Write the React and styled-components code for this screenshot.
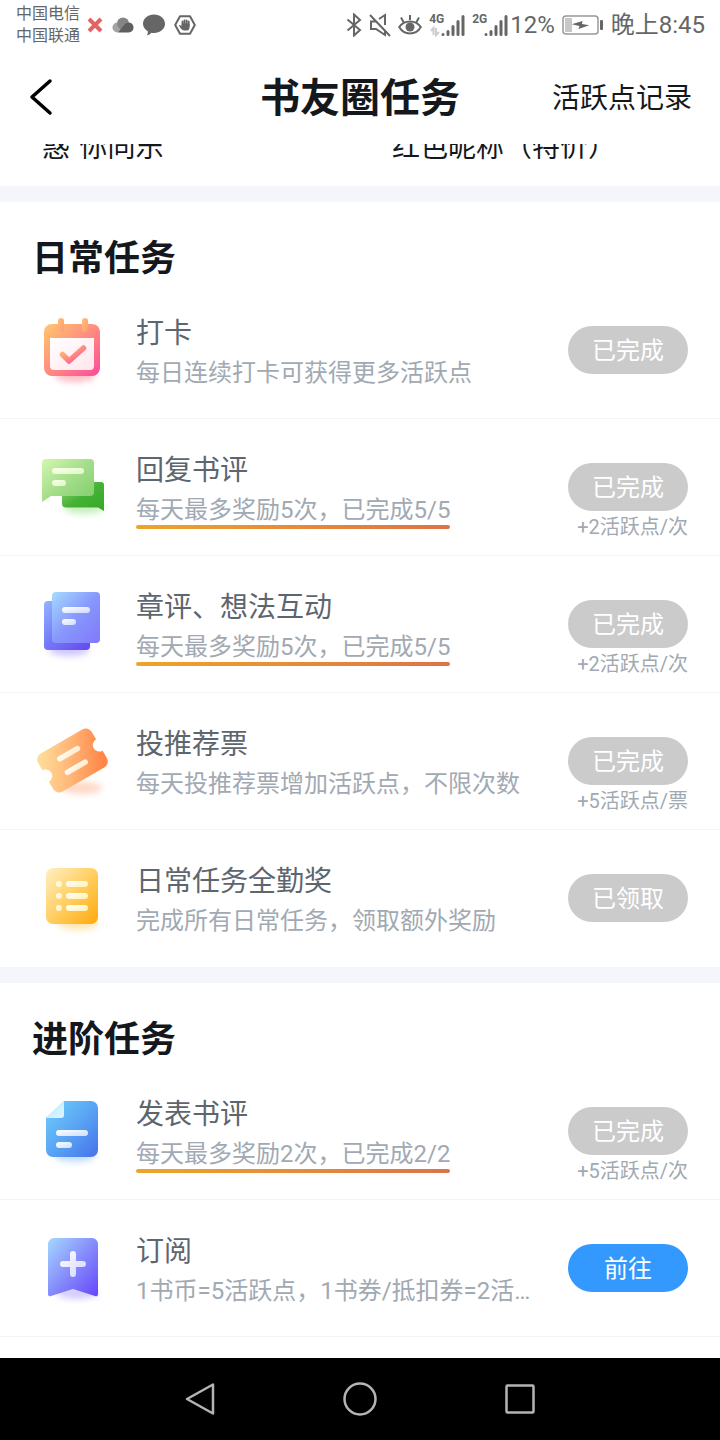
import React from "react";
import styled, { createGlobalStyle } from "styled-components";

const GlobalStyle = createGlobalStyle`
  * { box-sizing: border-box; }
  body {
    margin: 0;
    background: #fff;
    font-family: Roboto, "Noto Sans CJK SC", sans-serif;
    color: #14181d;
  }
  h1, h2, h3, p, ul { margin: 0; padding: 0; }
  button { border: 0; background: none; padding: 0; font: inherit; color: inherit; cursor: pointer; }
`;

const Page = styled.div`
  display: flex;
  flex-direction: column;
  min-height: 100vh;
`;

const StatusBar = styled.div`
  display: flex;
  align-items: center;
  justify-content: space-between;
  height: 50px;
  padding: 0 15px 0 16px;
  color: #666;
  font-size: 24px;
  line-height: 32px;
`;

const StatusGroup = styled.div`
  display: flex;
  align-items: center;
  gap: ${(p) => p.$gap}px;
  svg { display: block; flex: none; }
`;

const Carriers = styled.div`
  font-size: 16px;
  line-height: 22px;
`;

const Signal = styled.span`
  display: flex;
  align-items: flex-start;
`;

const SignalLabel = styled.span`
  width: 12px;
  font-size: 12px;
  line-height: 12px;
  font-weight: 700;
`;

const Header = styled.header`
  display: grid;
  grid-template-columns: 1fr auto 1fr;
  align-items: center;
  height: 94px;
  padding: 0 28px;
`;

const BackButton = styled.button`
  justify-self: start;
  svg { display: block; }
`;

const Title = styled.h1`
  padding-top: 4px;
  font-size: 40px;
  line-height: 56px;
  font-weight: 700;
`;

const RecordLink = styled.a`
  justify-self: end;
  padding-top: 4px;
  color: inherit;
  text-decoration: none;
  font-size: 28px;
  line-height: 40px;
`;

const Perks = styled.div`
  display: grid;
  grid-template-columns: 350px 1fr;
  align-content: end;
  height: 42px;
  padding: 0 0 20px 42px;
  overflow: hidden;
  font-size: 28px;
  line-height: 36px;
  white-space: pre;
`;

const Section = styled.section`
  border-top: 16px solid #f5f6fb;
`;

const SectionTitle = styled.h2`
  padding: 34px 32px 0;
  font-size: 36px;
  line-height: 46px;
  font-weight: 700;
`;

const List = styled.ul`
  list-style: none;
`;

const Row = styled.li`
  display: flex;
  align-items: flex-start;
  height: 137px;
  padding: 28px 32px 0;
  border-bottom: 1px solid #f4f4f5;
  ${Section}:not(:last-child) &:last-child { border-color: transparent; }
`;

const IconBox = styled.div`
  flex: none;
  width: 80px;
  height: 80px;
  margin-right: 24px;
  svg { display: block; overflow: visible; }
`;

const Info = styled.div`
  flex: 1;
  min-width: 0;
  padding-top: 4px;
`;

const TaskName = styled.h3`
  font-size: 28px;
  line-height: 40px;
  font-weight: 400;
  color: #5d656e;
`;

const TaskHint = styled.p`
  margin-top: 2px;
  font-size: 24px;
  line-height: 34px;
  color: #a1a9b2;
  overflow: hidden;
  text-overflow: ellipsis;
  white-space: nowrap;
`;

const Progress = styled(TaskHint)`
  width: fit-content;
  max-width: 100%;
  &::after {
    content: "";
    display: block;
    height: 4px;
    margin-top: -2px;
    border-radius: 2px;
    background: linear-gradient(90deg, #eda52a, #dd7347);
  }
`;

const Action = styled.div`
  flex: none;
  display: flex;
  flex-direction: column;
  align-items: flex-end;
  margin-left: 36px;
  padding-top: 16px;
`;

const Pill = styled.button`
  width: 120px;
  height: 48px;
  padding-top: 2px;
  border-radius: 24px;
  background: ${(p) => (p.$active ? "#3399ff" : "#cbcbcb")};
  color: #fff;
  font-size: 24px;
  line-height: 46px;
`;

const Reward = styled.span`
  margin-top: 2px;
  font-size: 20px;
  line-height: 28px;
  color: #a1a9b2;
`;

const Nav = styled.nav`
  display: flex;
  align-items: center;
  justify-content: center;
  gap: 124px;
  height: 82px;
  margin-top: auto;
  background: #000;
  svg { display: block; }
`;

function Grad({ id, from, mid, to }) {
  return (
    <linearGradient id={id} x1="0" y1="0" x2="1" y2="1">
      <stop offset="0" stopColor={from} />
      {mid && <stop offset="0.5" stopColor={mid} />}
      <stop offset="1" stopColor={to} />
    </linearGradient>
  );
}

function TaskSvg({ id, shadow, cx = 43, cy = 64, children }) {
  return (
    <svg width="80" height="80" viewBox="0 0 80 80" aria-hidden="true">
      <defs>
        <filter id={`${id}-blur`} x="-50%" y="-100%" width="200%" height="300%">
          <feGaussianBlur stdDeviation="3" />
        </filter>
      </defs>
      <ellipse cx={cx} cy={cy} rx="20" ry="6" fill={shadow} opacity="0.5" filter={`url(#${id}-blur)`} />
      {children}
    </svg>
  );
}

const icons = {
  checkin: (
    <TaskSvg id="checkin" shadow="#ff7a8a" cy={66}>
      <defs>
        <Grad id="ci-body" from="#ffc76e" mid="#ff8c80" to="#fb4a9c" />
        <Grad id="ci-peg" from="#ffc070" to="#ff9a78" />
        <Grad id="ci-in" from="#ffffff" to="#ffe6ec" />
      </defs>
      <rect x="12" y="14" width="56" height="52" rx="8" fill="url(#ci-body)" />
      <rect x="26" y="8" width="6" height="14" rx="3" fill="url(#ci-peg)" />
      <rect x="50" y="8" width="6" height="14" rx="3" fill="url(#ci-peg)" />
      <path d="M18 28H62V56a4 4 0 0 1-4 4H22a4 4 0 0 1-4-4Z" fill="url(#ci-in)" />
      <path d="M30.500 44.500L37 51L51.500 38" fill="none" stroke="url(#ci-body)" strokeWidth="5.500" strokeLinecap="round" strokeLinejoin="round" />
    </TaskSvg>
  ),
  reply: (
    <TaskSvg id="reply" shadow="#8fe07a" cx={52} cy={61}>
      <defs>
        <Grad id="re-f" from="#d2f7b0" mid="#a4dd8a" to="#7fce6a" />
        <Grad id="re-b" from="#8fd673" mid="#45b235" to="#35a826" />
        <Grad id="re-l" from="#fbffe9" to="#dff8c4" />
      </defs>
      <path d="M34 35H69a3 3 0 0 1 3 3V64L66 60.500H34a4 4 0 0 1-4-4V39a4 4 0 0 1 4-4Z" fill="url(#re-b)" />
      <path d="M14 12H58a4 4 0 0 1 4 4V45a4 4 0 0 1-4 4H19L10 55V16a4 4 0 0 1 4-4Z" fill="url(#re-f)" />
      <rect x="20" y="21" width="32" height="6" rx="3" fill="url(#re-l)" />
      <rect x="20" y="33" width="14" height="6" rx="3" fill="url(#re-l)" />
    </TaskSvg>
  ),
  chapter: (
    <TaskSvg id="chapter" shadow="#a08cff" cx={37} cy={66}>
      <defs>
        <Grad id="ch-b" from="#94b4ff" mid="#7377f8" to="#6447ee" />
        <Grad id="ch-f" from="#a6dbff" mid="#8798fc" to="#8078fb" />
        <Grad id="ch-l" from="#ffffff" to="#ced9ff" />
      </defs>
      <rect x="12" y="17" width="46" height="49" rx="4" fill="url(#ch-b)" />
      <rect x="20" y="8" width="48" height="51" rx="4" fill="url(#ch-f)" />
      <rect x="30" y="23" width="28" height="6" rx="3" fill="url(#ch-l)" />
      <rect x="30" y="35" width="14" height="6" rx="3" fill="url(#ch-l)" />
    </TaskSvg>
  ),
  ticket: (
    <TaskSvg id="ticket" shadow="#ffb08a" cx={50} cy={67}>
      <defs>
        <linearGradient id="ti-b" x1="0" y1="0.300" x2="1" y2="0.700">
          <stop offset="0" stopColor="#ffdb98" />
          <stop offset="0.500" stopColor="#ffb374" />
          <stop offset="1" stopColor="#ff8646" />
        </linearGradient>
        <Grad id="ti-l" from="#ffffff" to="#ffe8c0" />
      </defs>
      <g transform="translate(40.500 39.500) rotate(-30)">
        <path d="M-24-22H24a7 7 0 0 1 7 7V-6.500a6.500 6.500 0 0 0 0 13V15a7 7 0 0 1-7 7H-24a7 7 0 0 1-7-7V6.500a6.500 6.500 0 0 0 0-13V-15a7 7 0 0 1 7-7Z" fill="url(#ti-b)" />
        <rect x="-13" y="-10.500" width="26" height="5.500" rx="2.750" fill="url(#ti-l)" />
        <rect x="-13" y="5" width="26" height="5.500" rx="2.750" fill="url(#ti-l)" />
      </g>
    </TaskSvg>
  ),
  award: (
    <TaskSvg id="award" shadow="#ffcf6a" cx={46} cy={66}>
      <defs>
        <Grad id="aw-b" from="#ffefc4" mid="#ffcf62" to="#ffa80a" />
        <Grad id="aw-l" from="#ffffff" to="#fff0b4" />
      </defs>
      <rect x="14" y="10" width="52" height="56" rx="7" fill="url(#aw-b)" />
      {[26, 38, 50].map((y) => (
        <g key={y} fill="url(#aw-l)">
          <circle cx="27" cy={y} r="3" />
          <rect x="34" y={y - 3} width="22" height="6" rx="3" />
        </g>
      ))}
    </TaskSvg>
  ),
  review: (
    <TaskSvg id="review" shadow="#86b8ff" cy={65}>
      <defs>
        <Grad id="rv-b" from="#6fd0fb" mid="#5aa5f4" to="#4672ea" />
        <Grad id="rv-c" from="#b8ecff" to="#dcf6ff" />
        <Grad id="rv-l" from="#ffffff" to="#c9defc" />
      </defs>
      <path d="M32 10H59a7 7 0 0 1 7 7V59a7 7 0 0 1-7 7H21a7 7 0 0 1-7-7V27Z" fill="url(#rv-b)" />
      <path d="M32 10V24a3 3 0 0 1-3 3H14Z" fill="url(#rv-c)" />
      <rect x="24" y="39" width="32" height="6" rx="3" fill="url(#rv-l)" />
      <rect x="24" y="51" width="16" height="6" rx="3" fill="url(#rv-l)" />
    </TaskSvg>
  ),
  subscribe: (
    <TaskSvg id="subscribe" shadow="#a897ff" cx={45} cy={65}>
      <defs>
        <Grad id="su-b" from="#a5d8ff" mid="#868cfb" to="#6546fa" />
        <Grad id="su-l" from="#ffffff" to="#d3d3ff" />
      </defs>
      <path d="M22 10H60a6 6 0 0 1 6 6V66a2 2 0 0 1-3 2L42.500 61.400a4 4 0 0 0-3 0L19 68a2 2 0 0 1-3-2V16a6 6 0 0 1 6-6Z" fill="url(#su-b)" />
      <path d="M38 26a3 3 0 0 1 6 0V33H51a3 3 0 0 1 0 6H44V46a3 3 0 0 1-6 0V39H31a3 3 0 0 1 0-6H38Z" fill="url(#su-l)" />
    </TaskSvg>
  ),
};

const sections = [
  {
    title: "日常任务",
    tasks: [
      { icon: "checkin", name: "打卡", hint: "每日连续打卡可获得更多活跃点", action: "已完成" },
      { icon: "reply", name: "回复书评", hint: "每天最多奖励5次，已完成5/5", marked: true, action: "已完成", reward: "+2活跃点/次" },
      { icon: "chapter", name: "章评、想法互动", hint: "每天最多奖励5次，已完成5/5", marked: true, action: "已完成", reward: "+2活跃点/次" },
      { icon: "ticket", name: "投推荐票", hint: "每天投推荐票增加活跃点，不限次数", action: "已完成", reward: "+5活跃点/票" },
      { icon: "award", name: "日常任务全勤奖", hint: "完成所有日常任务，领取额外奖励", action: "已领取" },
    ],
  },
  {
    title: "进阶任务",
    tasks: [
      { icon: "review", name: "发表书评", hint: "每天最多奖励2次，已完成2/2", marked: true, action: "已完成", reward: "+5活跃点/次" },
      { icon: "subscribe", name: "订阅", hint: "1书币=5活跃点，1书券/抵扣券=2活跃点", action: "前往", active: true },
    ],
  },
];

function Task({ task }) {
  const Hint = task.marked ? Progress : TaskHint;
  return (
    <Row>
      <IconBox>{icons[task.icon]}</IconBox>
      <Info>
        <TaskName>{task.name}</TaskName>
        <Hint>{task.hint}</Hint>
      </Info>
      <Action>
        <Pill type="button" $active={task.active}>{task.action}</Pill>
        {task.reward && <Reward>{task.reward}</Reward>}
      </Action>
    </Row>
  );
}

function SignalBars({ label, data }) {
  return (
    <Signal>
      <SignalLabel>{label}</SignalLabel>
      <svg width="24" height="24" viewBox="0 0 24 24" overflow="visible" aria-hidden="true">
        <g stroke="#666" strokeWidth="3" strokeLinecap="round">
          <path d="M2 21.500V21.500M7 21.500V18.500M12 21.500V13.500M17 21.500V8.500M22 21.500V3.500" />
        </g>
        {data && <path d="M-10 18L-7.500 15V22M-5 15V22L-2 19" fill="none" stroke="#ccc" strokeWidth="2" />}
      </svg>
    </Signal>
  );
}

function StatusIcons() {
  return (
    <StatusGroup $gap={9}>
      <svg width="16" height="16" viewBox="0 0 16 16" aria-hidden="true">
        <path d="M2 2L14 14M14 2L2 14" stroke="#e06464" strokeWidth="4" />
      </svg>
      <svg width="22" height="16" viewBox="0 0 22 16" aria-hidden="true">
        <circle cx="5.500" cy="10.500" r="5" fill="#a3a3a3" />
        <circle cx="11" cy="6.500" r="6" fill="#858585" />
        <path d="M6 15.500L12.500 7.500a5 5 0 1 1 4 8Z" fill="#5f5f5f" />
      </svg>
      <svg width="22" height="22" viewBox="0 0 22 22" aria-hidden="true">
        <path d="M11 0.500C17 0.500 22 4.500 22 9.800S17 19 11 19C10 19 9.200 18.900 8.400 18.700C7.400 20 5.500 21 3.800 21.300C4.600 20.200 5 18.700 4.800 17.200C1.900 15.600 0 12.900 0 9.800C0 4.500 5 0.500 11 0.500Z" fill="#666" />
      </svg>
      <svg width="22" height="20" viewBox="0 0 22 20" aria-hidden="true">
        <path d="M6 1.200H16L20.800 10L16 18.800H6L1.200 10Z" fill="none" stroke="#666" strokeWidth="2" strokeLinejoin="round" />
        <path d="M8.500 10V6.500M10.500 10V5.300M12.600 10V5.300M14.700 11V6.500" stroke="#666" strokeWidth="1.800" strokeLinecap="round" />
        <path d="M7.600 8.500H15.600V12C15.600 14.500 14.500 15.600 12 15.600H10.500C8.500 15.600 6.500 13.500 5 10.800C5 9.500 6.500 10 7.600 11.500Z" fill="#666" />
      </svg>
    </StatusGroup>
  );
}

export default function App() {
  return (
    <Page>
      <GlobalStyle />
      <StatusBar>
        <StatusGroup $gap={7}>
          <Carriers>
            <div>中国电信</div>
            <div>中国联通</div>
          </Carriers>
          <StatusIcons />
        </StatusGroup>
        <StatusGroup $gap={7}>
          <StatusGroup $gap={2}>
            <StatusGroup $gap={7}>
              <svg width="16" height="24" viewBox="0 0 16 24" aria-hidden="true">
                <path d="M1.500 6.500L14 17L8 22.500V1.500L14 7L1.500 17.500" fill="none" stroke="#666" strokeWidth="2" />
              </svg>
              <svg width="22" height="24" viewBox="0 0 22 24" aria-hidden="true">
                <path d="M1 2L21 23M7 8.500H2V16H7L16 22V17M10 6L16 2V12" fill="none" stroke="#666" strokeWidth="2" />
              </svg>
              <svg width="24" height="22" viewBox="0 0 24 22" aria-hidden="true">
                <path d="M1.200 13C6 5.500 18 5.500 22.800 13C18 21.500 6 21.500 1.200 13ZM12 6V1M5.500 8L3 3.500M18.500 8L21 3.500" fill="none" stroke="#666" strokeWidth="2" />
                <circle cx="12" cy="13" r="4.500" fill="#666" />
              </svg>
              <SignalBars label="4G" data />
              <SignalBars label="2G" />
            </StatusGroup>
            <span>12%</span>
          </StatusGroup>
          <svg width="42" height="20" viewBox="0 0 42 20" aria-hidden="true">
            <rect x="1" y="1" width="35" height="18" rx="3" fill="none" stroke="#999" strokeWidth="1.500" />
            <rect x="3" y="3" width="7" height="14" fill="#c8c8c8" />
            <path d="M9.700 9.300L20.500 6L20 9L27.300 10.300L16.500 14L17.500 11Z" fill="#666" />
            <rect x="38" y="5" width="3" height="10" rx="1" fill="#666" />
          </svg>
          <span>晚上8:45</span>
        </StatusGroup>
      </StatusBar>

      <Header>
        <BackButton type="button" aria-label="返回">
          <svg width="26" height="40" viewBox="0 0 26 40" aria-hidden="true">
            <path d="M22 4L4 20L22 36" fill="none" stroke="#000" strokeWidth="3.500" strokeLinecap="round" strokeLinejoin="round" />
          </svg>
        </BackButton>
        <Title>书友圈任务</Title>
        <RecordLink href="#records">活跃点记录</RecordLink>
      </Header>

      <Perks>
        <span>{"惑\u2004你同乐"}</span>
        <span>红色昵称（特价）</span>
      </Perks>

      <main>
        {sections.map((section) => (
          <Section key={section.title}>
            <SectionTitle>{section.title}</SectionTitle>
            <List>
              {section.tasks.map((task) => (
                <Task key={task.name} task={task} />
              ))}
            </List>
          </Section>
        ))}
      </main>

      <Nav aria-label="系统导航">
        <button type="button" aria-label="后退">
          <svg width="36" height="36" viewBox="0 0 36 36" aria-hidden="true">
            <path d="M31 3.500V32.500L5 18Z" fill="none" stroke="#b4b4b4" strokeWidth="2.500" strokeLinejoin="round" />
          </svg>
        </button>
        <button type="button" aria-label="主页">
          <svg width="36" height="36" viewBox="0 0 36 36" aria-hidden="true">
            <circle cx="18" cy="18" r="15.500" fill="none" stroke="#b4b4b4" strokeWidth="2.500" />
          </svg>
        </button>
        <button type="button" aria-label="最近任务">
          <svg width="36" height="36" viewBox="0 0 36 36" aria-hidden="true">
            <rect x="4.500" y="4.500" width="27" height="27" rx="1" fill="none" stroke="#b4b4b4" strokeWidth="2.500" />
          </svg>
        </button>
      </Nav>
    </Page>
  );
}
